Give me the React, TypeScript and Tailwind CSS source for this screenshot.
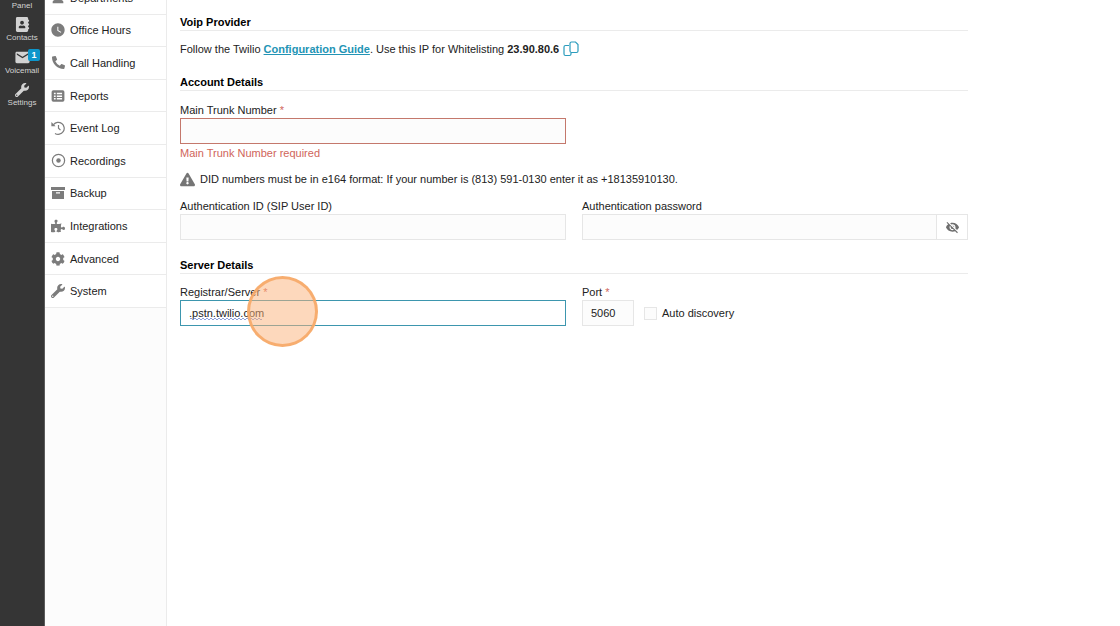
import type { InputHTMLAttributes, ReactNode } from "react";
import { FaAddressBook, FaCog, FaExclamationTriangle, FaPhoneAlt, FaPuzzlePiece, FaWrench } from "react-icons/fa";
import { IoMdEyeOff } from "react-icons/io";
import { MdEmail, MdPerson, MdWatchLater } from "react-icons/md";

const ReportsIcon = () => (
  <svg viewBox="0 0 24 24" className="size-[14px]" fill="currentColor">
    <path
      fillRule="evenodd"
      d="M4 2h16a3 3 0 0 1 3 3v14a3 3 0 0 1-3 3H4a3 3 0 0 1-3-3V5a3 3 0 0 1 3-3ZM5 6.500v2.500h3v-2.500ZM10 6.500v2.500h9v-2.500ZM5 11v2.500h3v-2.500ZM10 11v2.500h9v-2.500ZM5 15.500v2.500h3v-2.500ZM10 15.500v2.500h9v-2.500Z"
    />
  </svg>
);

const HistoryIcon = () => (
  <svg viewBox="0 0 14 14" className="size-[14px]" fill="none" stroke="currentColor" strokeWidth="1.2">
    <path d="M2.500 3.600A6 6 0 1 1 4 12.400" />
    <path d="M7.500 4v3.200l2 2" />
    <path d="M.4 1v4.200h4.200Z" fill="currentColor" stroke="none" />
  </svg>
);

const RecordIcon = () => (
  <svg viewBox="0 0 24 24" className="size-[15px]">
    <circle cx="12" cy="12" r="9.8" fill="none" stroke="currentColor" strokeWidth="2" />
    <circle cx="12" cy="12" r="3.6" fill="currentColor" />
  </svg>
);

const BackupIcon = () => (
  <svg viewBox="0 0 14 12" className="h-[12px] w-[14px]" fill="currentColor">
    <path d="M0 0h14v3H0Z" />
    <path fillRule="evenodd" d="M1 4h12v8H1ZM5 5.2v1.2h4V5.2Z" />
  </svg>
);

const CopyIcon = () => (
  <svg viewBox="0 0 16 16" className="size-[16px]" fill="none" stroke="currentColor" strokeWidth="1.2">
    <path d="M6 4.500H2.500A1.500 1.500 0 0 0 1 6V13A1.500 1.500 0 0 0 2.500 14.500H6.500A1.500 1.500 0 0 0 8 13V12" />
    <path d="M8.500 1H12.500L15 3.500V10A1.500 1.500 0 0 1 13.500 11.500H8.500A1.500 1.500 0 0 1 7 10V2.500A1.500 1.500 0 0 1 8.500 1Z" />
  </svg>
);

const railItems = [
  { label: "Panel", icon: null },
  { label: "Contacts", icon: <FaAddressBook className="size-[15px]" /> },
  { label: "Voicemail", icon: <MdEmail className="size-[17px]" />, badge: 1 },
  { label: "Settings", icon: <FaWrench className="size-[14px]" /> },
];

const menuItems = [
  { label: "Departments", icon: <MdPerson className="size-[18px]" /> },
  { label: "Office Hours", icon: <MdWatchLater className="size-[16px]" /> },
  { label: "Call Handling", icon: <FaPhoneAlt className="size-[13px]" /> },
  { label: "Reports", icon: <ReportsIcon /> },
  { label: "Event Log", icon: <HistoryIcon /> },
  { label: "Recordings", icon: <RecordIcon /> },
  { label: "Backup", icon: <BackupIcon /> },
  { label: "Integrations", icon: <FaPuzzlePiece className="size-[14px]" /> },
  { label: "Advanced", icon: <FaCog className="size-[14px]" /> },
  { label: "System", icon: <FaWrench className="size-[14px]" /> },
];

const Rail = () => (
  <nav className="w-[45px] shrink-0 border-r border-[#5c5c5c] bg-[#353535] text-[#d2d2d2]">
    <div className="-mt-[22px] grid h-[130px] auto-rows-fr">
      {railItems.map((item) => (
        <a key={item.label} href="#" className="relative flex flex-col items-center justify-end text-[8px] leading-[10px]">
          <span className="flex h-[17px] items-center">{item.icon}</span>
          {item.label}
          {item.badge && (
            <span className="absolute top-[6px] right-[4px] flex h-[12px] w-[12px] items-center justify-center rounded-[2px] bg-[#0d96cb] text-[9px] font-bold text-white">
              {item.badge}
            </span>
          )}
        </a>
      ))}
    </div>
  </nav>
);

const Menu = () => (
  <nav className="w-[122px] shrink-0 border-r border-[#ebebeb] bg-[#fcfcfc]">
    <div className="-mt-[18px] grid h-[326px] auto-rows-fr">
      {menuItems.map((item) => (
        <a key={item.label} href="#" className="flex items-center border-b border-[#ebebeb] bg-white pl-[5px] text-[#222]">
          <span className="flex w-[16px] justify-center text-[#7c7c7c]">{item.icon}</span>
          <span className="ml-1">{item.label}</span>
        </a>
      ))}
    </div>
  </nav>
);

const SectionTitle = ({ children }: { children: ReactNode }) => (
  <h2 className="border-b border-[#ebebeb] font-bold text-black">{children}</h2>
);

type FieldProps = InputHTMLAttributes<HTMLInputElement> & { id: string; label: string };

const Label = ({ id, label, required }: { id: string; label: string; required?: boolean }) => (
  <label htmlFor={id} className="block">
    {label}
    {required && <span className="text-[#d0655a]"> *</span>}
  </label>
);

const Field = ({ id, label, required, className, ...rest }: FieldProps) => (
  <div>
    <Label id={id} label={label} required={required} />
    <input id={id} className={`block h-[26px] border px-2 outline-none ${className}`} {...rest} />
  </div>
);

// spell checker's wavy line under the server name
const Squiggle = () => (
  <svg className="pointer-events-none absolute bottom-[6px] left-[10px] h-[3px] w-[72px]" fill="none" stroke="#6f86cf">
    <path d={`M0 2${"q1 -2 2 0t2 0".repeat(18)}`} strokeWidth="0.8" />
  </svg>
);

const App = () => (
  <div className="flex h-screen overflow-hidden bg-white font-['Liberation_Sans',Arial,sans-serif] text-[11px] leading-[16px] text-[#222]">
    <Rail />
    <Menu />
    <main className="min-w-0 flex-1 px-[13px] pt-[14px]">
      <form className="max-w-[788px]">
        <SectionTitle>Voip Provider</SectionTitle>
        <div className="mt-[10px] flex items-center">
          <p>
            Follow the Twilio{" "}
            <a href="#" className="font-bold text-[#2394b5] underline">Configuration Guide</a>. Use this IP for Whitelisting{" "}
            <b>23.90.80.6</b>
          </p>
          <button type="button" aria-label="Copy IP" className="ml-1 text-[#2b9cbd]">
            <CopyIcon />
          </button>
        </div>

        <div className="mt-[17px]">
          <SectionTitle>Account Details</SectionTitle>
        </div>
        <div className="mt-[11px] grid grid-cols-2 gap-x-4">
          <div>
            <Field id="trunk" label="Main Trunk Number" required className="w-full border-[#c4786c] bg-[#fcfcfc]" />
            <p className="mt-px text-[#d0655a]">Main Trunk Number required</p>
          </div>
        </div>
        <p className="mt-[10px] flex items-center gap-[5px]">
          <FaExclamationTriangle className="size-[15px] shrink-0 text-[#757575]" />
          DID numbers must be in e164 format: If your number is (813) 591-0130 enter it as +18135910130.
        </p>
        <div className="mt-[11px] grid grid-cols-2 gap-x-4">
          <Field id="authId" label="Authentication ID (SIP User ID)" className="w-full border-[#e6e6e6] bg-[#fcfcfc]" />
          <div>
            <Label id="authPassword" label="Authentication password" />
            <div className="flex h-[26px] border border-[#e6e6e6]">
              <input id="authPassword" type="password" className="min-w-0 flex-1 bg-[#fcfcfc] px-2 outline-none" />
              <button type="button" aria-label="Show password" className="flex w-[31px] items-center justify-center border-l border-[#e6e6e6] text-[#6e6e6e]">
                <IoMdEyeOff className="size-[15px]" />
              </button>
            </div>
          </div>
        </div>

        <div className="mt-[17px]">
          <SectionTitle>Server Details</SectionTitle>
        </div>
        <div className="mt-[10px] grid grid-cols-2 gap-x-4">
          <div className="relative">
            <Field
              id="registrar"
              label="Registrar/Server"
              required
              defaultValue=".pstn.twilio.com"
              className="w-full border-[#3d96ae] bg-white"
            />
            <Squiggle />
            <span className="pointer-events-none absolute -top-2 left-[67px] size-[71px] rounded-full border-[3px] border-[#f7a867]/90 bg-[#fbb27a]/50" />
          </div>
          <div className="flex items-end gap-[10px]">
            <Field id="port" label="Port" required defaultValue="5060" className="w-[52px] border-[#e6e6e6] bg-[#fcfcfc]" />
            <label className="flex h-[26px] items-center gap-[5px]">
              <input type="checkbox" className="size-[13px] appearance-none border border-[#e6e6e6] bg-[#fcfcfc]" />
              Auto discovery
            </label>
          </div>
        </div>
      </form>
    </main>
  </div>
);

export default App;
